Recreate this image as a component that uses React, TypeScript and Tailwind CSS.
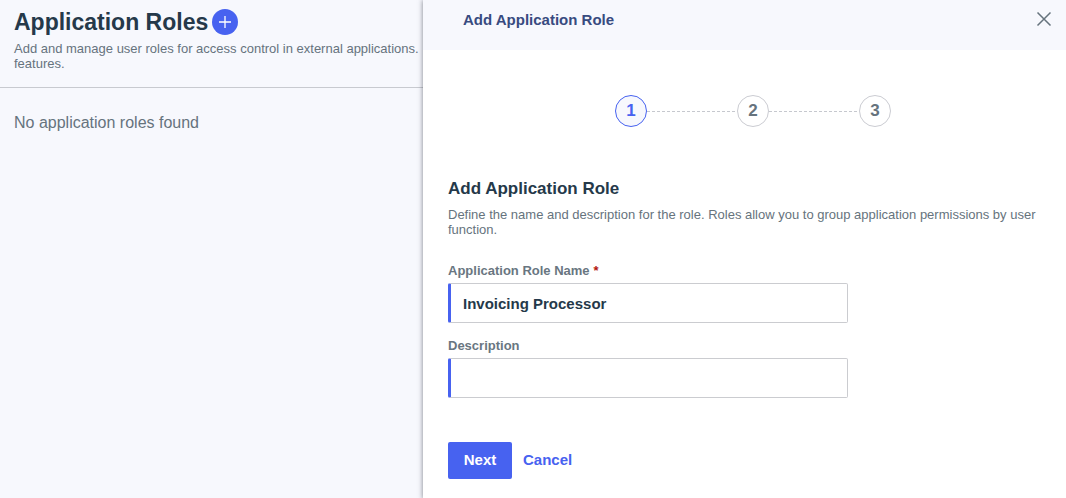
import { Fragment, useState } from 'react';

const steps = [1, 2, 3];

function Stepper({ current }: { current: number }) {
  return (
    <ol className="flex items-center justify-center" aria-label="Progress">
      {steps.map((step, index) => (
        <Fragment key={step}>
          {index > 0 && (
            <li aria-hidden="true" className="flex w-[90px]">
              <svg className="h-px w-full" shapeRendering="crispEdges">
                <line x1="0" y1="0.5" x2="100%" y2="0.5" stroke="#c6c8ce" strokeDasharray="3 2" />
              </svg>
            </li>
          )}
          <li
            aria-current={step === current ? 'step' : undefined}
            className={
              step === current
                ? 'flex size-8 items-center justify-center rounded-full border border-[#4762f0] bg-[#f7f8fd] text-[17px] font-bold text-[#4762f0]'
                : 'flex size-8 items-center justify-center rounded-full border border-[#cbccd2] bg-white text-[17px] font-bold text-[#66737d]'
            }
          >
            {step}
          </li>
        </Fragment>
      ))}
    </ol>
  );
}

interface FieldProps {
  id: string;
  label: string;
  required?: boolean;
  value: string;
  onChange: (value: string) => void;
}

function Field({ id, label, required, value, onChange }: FieldProps) {
  return (
    <div className="flex flex-col gap-1">
      <label htmlFor={id} className="text-[13px] leading-4 font-bold text-[#697681]">
        {label}
        {required && <span className="ml-1 text-[#b3160c]">*</span>}
      </label>
      <input
        id={id}
        type="text"
        required={required}
        value={value}
        onChange={(event) => onChange(event.target.value)}
        className="h-10 w-full rounded-xs border border-l-3 border-[#cbccd0] border-l-[#4762f0] bg-white px-3 text-[15px] font-bold text-[#25394a] outline-none"
      />
    </div>
  );
}

export default function App() {
  const [name, setName] = useState('Invoicing Processor');
  const [description, setDescription] = useState('');

  return (
    <div className="grid min-h-screen grid-cols-[423fr_643fr] bg-[#f7f8fd] font-['Helvetica_Neue','Liberation_Sans',Arial,sans-serif]">
      <main className="min-w-0">
        <header className="border-b border-[#c8cad0] pt-2 pb-4 pl-3.5">
          <div className="flex h-7 items-center gap-1">
            <h1 className="text-[23px] leading-7 font-bold whitespace-nowrap text-[#25394a]">Application Roles</h1>
            <button
              type="button"
              aria-label="Add application role"
              className="flex size-[26px] items-center justify-center rounded-full bg-[#4762f0]"
            >
              <svg viewBox="0 0 12 12" className="size-3" fill="none" stroke="white" strokeWidth="1.3">
                <path d="M6 0v12M0 6h12" />
              </svg>
            </button>
          </div>
          <p className="mt-[5px] text-[13px] leading-[15px] whitespace-nowrap text-[#66737d]">
            Add and manage user roles for access control in external applications.
            <br />
            features.
          </p>
        </header>
        <p className="pt-[23px] pl-3.5 text-base leading-6 text-[#66737d]">No application roles found</p>
      </main>

      <aside
        role="dialog"
        aria-labelledby="drawer-title"
        className="min-w-0 bg-white shadow-[0_0_5px_rgba(40,45,60,0.6)]"
      >
        <header className="flex h-[50px] items-start justify-between bg-[#f7f8fd] pt-2.5 pr-3.5 pl-10">
          <h2 id="drawer-title" className="text-[15px] leading-5 font-bold text-[#384b80]">
            Add Application Role
          </h2>
          <button type="button" aria-label="Close" className="flex h-[18px] items-center">
            <svg viewBox="0 0 16 16" className="size-4" fill="none" stroke="#66737d" strokeWidth="1.5">
              <path d="M1.5 1.5l13 13M14.5 1.5l-13 13" />
            </svg>
          </button>
        </header>

        <form className="pt-[45px] pr-2 pb-5 pl-[25px]" onSubmit={(event) => event.preventDefault()}>
          <Stepper current={1} />

          <h3 className="mt-[52px] text-[17px] leading-5 font-bold text-[#25394a]">Add Application Role</h3>
          <p className="mt-2 text-[13px] leading-[15px] text-[#66737d]">
            Define the name and description for the role. Roles allow you to group application permissions by user
            <br />
            function.
          </p>

          <div className="mt-[26px] flex max-w-[400px] flex-col gap-[15px]">
            <Field id="role-name" label="Application Role Name" required value={name} onChange={setName} />
            <Field id="role-description" label="Description" value={description} onChange={setDescription} />
          </div>

          <div className="mt-11 flex items-center gap-[11px] text-[15px] font-bold">
            <button type="submit" className="h-[37px] w-16 rounded-xs bg-[#4762f0] text-white">
              Next
            </button>
            <button type="button" className="text-[#4762f0]">
              Cancel
            </button>
          </div>
        </form>
      </aside>
    </div>
  );
}
